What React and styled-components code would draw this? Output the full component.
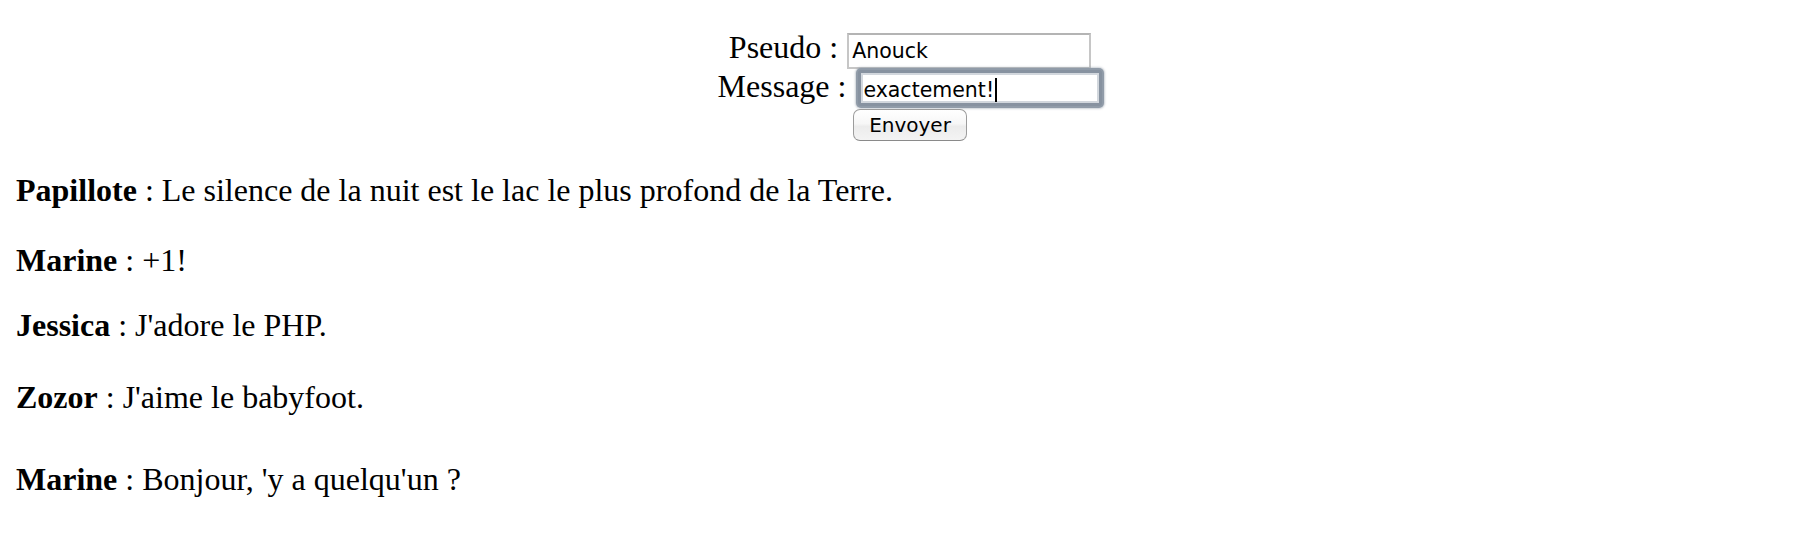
import React from 'react';
import styled, { createGlobalStyle } from 'styled-components';

const Global = createGlobalStyle`
  html, body { margin: 0; padding: 0; background: #fff; }
  body { font-family: "Liberation Serif", "Times New Roman", serif; color: #000; }
`;

const Page = styled.div`
  width: 1820px;
  height: 537px;
  overflow: hidden;
  background: #fff;
`;

const Form = styled.form`
  display: flex;
  flex-direction: column;
  align-items: center;
  padding-top: 31px;
  margin: 0;
`;

const Row = styled.div`
  display: flex;
  justify-content: center;
  align-items: baseline;
  height: ${(p) => p.$h}px;
`;

const Label = styled.label`
  font-size: 32px;
  line-height: 32px;
  margin-right: ${(p) => p.$gap}px;
  white-space: pre;
`;

const TextInput = styled.input`
  box-sizing: border-box;
  width: 244px;
  height: 36px;
  margin: 0;
  padding: 0 3px;
  border: 2px solid #c6c6c6;
  border-top-color: #b4b4b4;
  background: #fff;
  color: #000;
  font-family: "DejaVu Sans", "Lucida Grande", sans-serif;
  font-size: 20.5px;
  outline: none;
`;

const FocusedField = styled.div`
  box-sizing: border-box;
  width: 244px;
  height: 36px;
  padding: 3px 2px 0 2px;
  border: 3px solid #8792a0;
  border-radius: 3px;
  box-shadow: 0 0 0 2px #909ba8, 0 0 2px 3px rgba(140, 151, 164, 0.45),
    inset 0 0 0 2px #d2d7dd;
  background: #fff;
  font-family: "DejaVu Sans", "Lucida Grande", sans-serif;
  font-size: 20.5px;
  line-height: 28px;
  white-space: nowrap;
  overflow: hidden;
`;

const Caret = styled.span`
  display: inline-block;
  width: 2px;
  height: 24px;
  margin-left: 1px;
  background: #000;
  vertical-align: -5px;
`;

const SubmitButton = styled.button`
  box-sizing: border-box;
  width: 114px;
  height: 32px;
  margin: 0;
  padding: 0;
  border: 1px solid #9c9c9c;
  border-bottom-color: #8a8a8a;
  border-radius: 7px;
  background: linear-gradient(#ffffff 0%, #f7f7f7 45%, #ececec 55%, #f3f3f3 100%);
  color: #000;
  font-family: "DejaVu Sans", "Lucida Grande", sans-serif;
  font-size: 20px;
  line-height: 30px;
`;

const Messages = styled.div`
  margin-top: 31px;
  padding-left: 16px;
`;

const Message = styled.p`
  margin: ${(p) => p.$top}px 0 0 0;
  font-size: 32px;
  line-height: 37px;
  white-space: nowrap;
`;

const Author = styled.strong`
  font-weight: bold;
`;

const messages = [
  { author: 'Papillote', text: 'Le silence de la nuit est le lac le plus profond de la Terre.', top: 0 },
  { author: 'Marine', text: '+1!', top: 33 },
  { author: 'Jessica', text: "J'adore le PHP.", top: 28 },
  { author: 'Zozor', text: "J'aime le babyfoot.", top: 35 },
  { author: 'Marine', text: "Bonjour, 'y a quelqu'un ?", top: 45 },
];

export default function App() {
  return (
    <Page>
      <Global />
      <Form onSubmit={(e) => e.preventDefault()}>
        <Row $h={39}>
          <Label htmlFor="pseudo" $gap={9}>Pseudo :</Label>
          <TextInput id="pseudo" type="text" value="Anouck" readOnly />
        </Row>
        <Row $h={39}>
          <Label $gap={12}>Message :</Label>
          <FocusedField role="textbox">
            exactement!<Caret />
          </FocusedField>
        </Row>
        <Row $h={32}>
          <SubmitButton type="button">Envoyer</SubmitButton>
        </Row>
      </Form>
      <Messages>
        {messages.map((m, i) => (
          <Message key={i} $top={m.top}>
            <Author>{m.author}</Author> : {m.text}
          </Message>
        ))}
      </Messages>
    </Page>
  );
}
